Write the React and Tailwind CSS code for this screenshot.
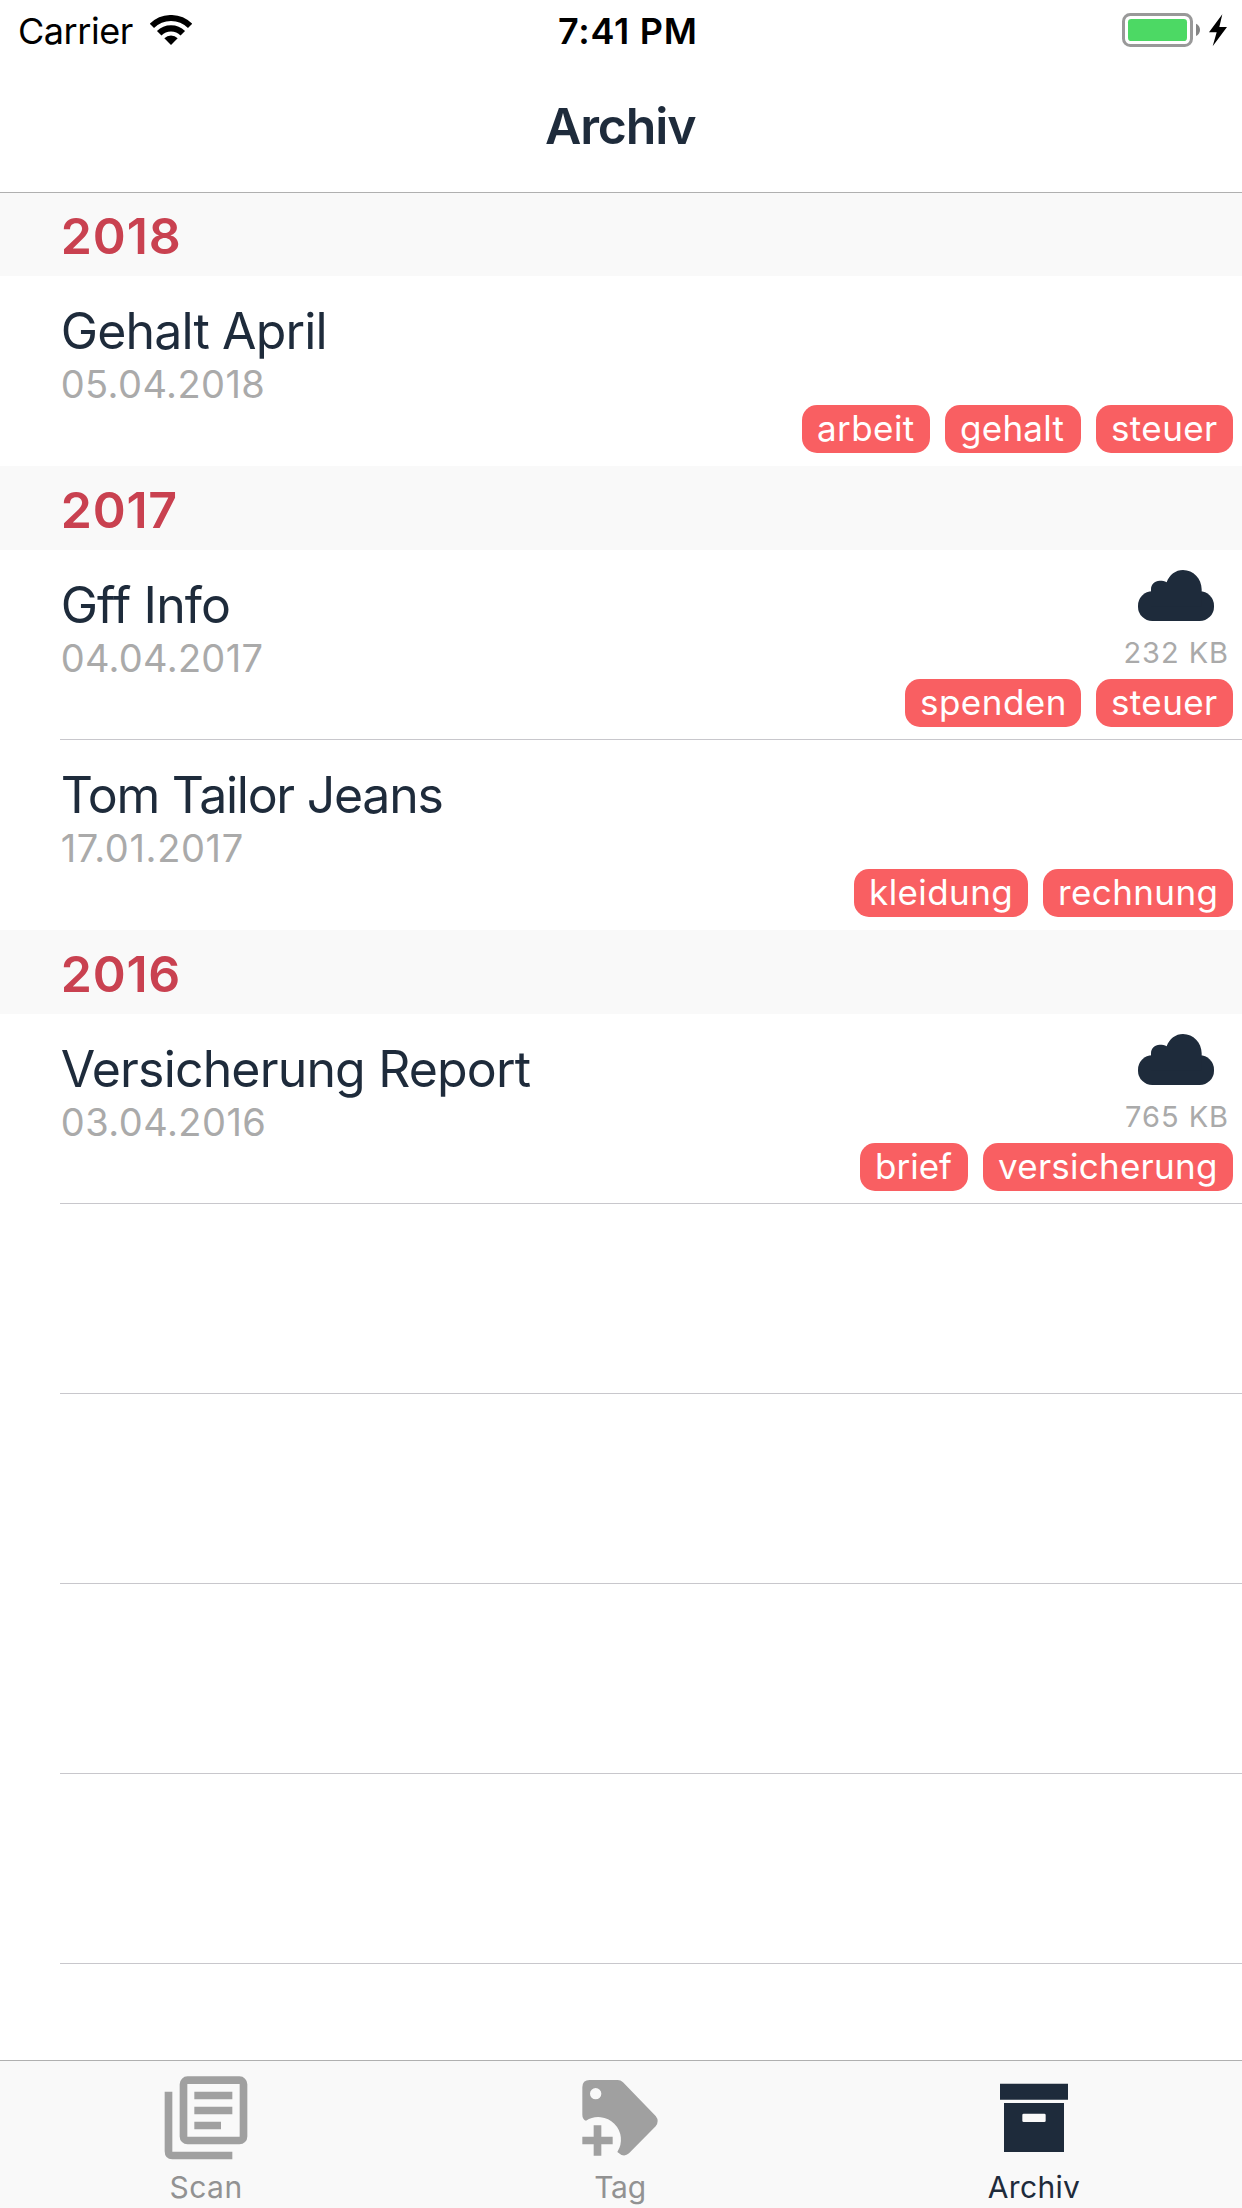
const sections = [
  {
    year: "2018",
    tracking: "tracking-[0.95px]",
    rows: [
      {
        title: "Gehalt April",
        titleTracking: "tracking-[-0.85px]",
        date: "05.04.2018",
        dateTracking: "tracking-[0.42px]",
        tags: [
          ["arbeit", "w-32 tracking-[0.42px]"],
          ["gehalt", "w-[136px] tracking-[0.26px]"],
          ["steuer", "w-[137px] tracking-[0.38px]"],
        ],
      },
    ],
  },
  {
    year: "2017",
    tracking: "tracking-[0.8px]",
    rows: [
      {
        title: "Gff Info",
        titleTracking: "tracking-[-0.88px]",
        date: "04.04.2017",
        dateTracking: "tracking-[0.3px]",
        size: "232 KB",
        line: true,
        tags: [
          ["spenden", "w-44 tracking-[0.48px]"],
          ["steuer", "w-[137px] tracking-[0.38px]"],
        ],
      },
      {
        title: "Tom Tailor Jeans",
        titleTracking: "tracking-[-1.27px]",
        date: "17.01.2017",
        dateTracking: "tracking-[0.65px]",
        tags: [
          ["kleidung", "w-[174px] tracking-[0.42px]"],
          ["rechnung", "w-[190px] tracking-[0.4px]"],
        ],
      },
    ],
  },
  {
    year: "2016",
    tracking: "tracking-[0.8px]",
    rows: [
      {
        title: "Versicherung Report",
        titleTracking: "tracking-[-0.84px]",
        date: "03.04.2016",
        dateTracking: "tracking-[0.48px]",
        size: "765 KB",
        line: true,
        tags: [
          ["brief", "w-[108px] tracking-[0px]"],
          ["versicherung", "w-[250px] tracking-[0.25px]"],
        ],
      },
    ],
  },
];

function WifiIcon() {
  return (
    <svg className="h-[30px] w-[42px]" viewBox="450 45 126 90" fill="none" stroke="#000">
      <path d="M455.7 77.7A81 81 0 0 1 570.3 77.7" strokeWidth="18" />
      <path d="M477.6 99.6A50 50 0 0 1 548.4 99.6" strokeWidth="19" />
      <path d="M493 115A28 28 0 0 1 533 115L513 135Z" fill="#000" stroke="none" />
    </svg>
  );
}

function BatteryIcon() {
  return (
    <svg className="h-[34px] w-[106px]" viewBox="240 39 318 102">
      <rect x="244.5" y="43.5" width="204" height="93" rx="20" fill="none" stroke="#999" strokeWidth="9" />
      <rect x="258" y="57" width="177" height="66" rx="10" fill="#4cd964" />
      <path d="M462 71C478 78 478 101 462 108Z" fill="#858585" />
      <path d="M541 43L501 97H524L512 139L555 81H532Z" fill="#000" />
    </svg>
  );
}

function CloudIcon() {
  return (
    <svg className="h-[51px] w-[76px]" viewBox="1074 570 228 153" fill="#1e2b3b">
      <rect x="1074" y="634" width="228" height="89" rx="43" />
      <path d="M1113 680V628C1113 613 1124 602 1139 602C1147 602 1154 603 1160 607C1168 584 1187 570 1209 570C1240 570 1265 596 1265 628V680Z" />
    </svg>
  );
}

function ScanIcon() {
  return (
    <svg className="h-[90px] w-[90px]" viewBox="96 60 270 270" fill="#a0a0a0">
      <rect x="160.5" y="90.5" width="180" height="181" rx="12" fill="none" stroke="#a0a0a0" strokeWidth="23" />
      <path d="M104 125H127V305H307V328H127Q104 327 104 304Z" />
      <path d="M193 125H307V148H193ZM193 170H307V193H193ZM193 215H273V238H193Z" />
    </svg>
  );
}

function TagIcon() {
  return (
    <svg className="h-[90px] w-[90px]" viewBox="78 60 270 270" fill="#a0a0a0">
      <path
        fillRule="evenodd"
        d="M119 90H203Q212 90 219 97L317 198Q329 213 317 229L237 310Q221 324 202 306A68 68 0 0 0 108 212Q97 208 97 194V112Q97 90 119 90ZM137 114A17 17 0 1 0 137 148A17 17 0 1 0 137 114Z"
      />
      <path d="M131 226H154V260H188V283H154V317H131V283H97V260H131Z" />
    </svg>
  );
}

function ArchiveIcon() {
  return (
    <svg className="h-[90px] w-[90px]" viewBox="90 60 270 270" fill="#1e2b3b">
      <path d="M120 101H324V149H120Z" />
      <path
        fillRule="evenodd"
        d="M132 159H312V306H132ZM191 191Q187 191 187 195V212Q187 216 191 216H253Q257 216 257 212V195Q257 191 253 191Z"
      />
    </svg>
  );
}

function Row({ row }) {
  return (
    <div className="ml-[60px]">
      <div className={`flex h-[190px] justify-between pr-[9px] ${row.line ? "border-b border-[#c8c7cc]" : ""}`}>
        <div className="flex flex-col pt-[25px] pl-[0.7px] whitespace-nowrap">
          <div className={`text-[50px] leading-[60px] ${row.titleTracking}`}>{row.title}</div>
          <div className={`mt-px text-[38px] leading-[44px] text-[#aaa] ${row.dateTracking}`}>{row.date}</div>
        </div>
        <div className="flex flex-col items-end">
          <div className="flex h-[129px] shrink-0 flex-col items-end pt-5">
            {row.size && (
              <>
                <div className="pr-[19px]">
                  <CloudIcon />
                </div>
                <div className="mt-[14px] pr-[4px] text-[29px] leading-[36px] tracking-[0.95px] text-[#aaa]">{row.size}</div>
              </>
            )}
          </div>
          <div className="flex gap-[15px]">
            {row.tags.map(([name, style]) => (
              <div
                key={name}
                className={`h-12 rounded-[15px] bg-[#f95f62] pl-[15px] text-[35px] leading-[46px] whitespace-nowrap text-white ${style}`}
              >
                {name}
              </div>
            ))}
          </div>
        </div>
      </div>
    </div>
  );
}

const tabs = [
  { name: "Scan", Icon: ScanIcon, style: "text-[#929292] tracking-[0.49px]" },
  { name: "Tag", Icon: TagIcon, style: "text-[#929292] tracking-[-0.26px]" },
  { name: "Archiv", Icon: ArchiveIcon, style: "text-[#1e2b3b] tracking-[0.3px]" },
];

export default function App() {
  return (
    <div className="flex h-[2208px] w-[1242px] flex-col overflow-hidden bg-white font-['Inter',sans-serif] text-[#1e2b3b]">
      <header className="h-48 shrink-0">
        <div className="flex h-[60px] text-black">
          <div className="w-[150px] pt-[9px] pl-[18px] text-[36px] leading-[44px] tracking-[-0.46px]">Carrier</div>
          <div className="pt-[15px]">
            <WifiIcon />
          </div>
          <div className="ml-[366px] pt-[9px] text-[36px] leading-[44px] font-semibold tracking-[0.72px]">7:41 PM</div>
          <div className="mr-[14px] ml-auto pt-[13px]">
            <BatteryIcon />
          </div>
        </div>
        <h1 className="pt-9 pr-[1.5px] text-center text-[50px] leading-[60px] font-semibold tracking-[-1.1px]">Archiv</h1>
      </header>

      <main className="flex-1 overflow-hidden">
        {sections.map((s, i) => (
          <section key={s.year}>
            <h2
              className={`h-[84px] bg-[#f9f9f9] pt-[14px] pl-[60.7px] text-[50px] leading-[60px] font-semibold text-[#c94150] ${s.tracking} ${
                i === 0 ? "shadow-[inset_0_1px_0_#b0b0b0]" : ""
              }`}
            >
              {s.year}
            </h2>
            {s.rows.map((r) => (
              <Row key={r.title} row={r} />
            ))}
          </section>
        ))}
        {[0, 1, 2, 3].map((n) => (
          <div key={n} className="ml-[60px] h-[190px] border-b border-[#c8c7cc]" />
        ))}
      </main>

      <nav className="flex h-[148px] shrink-0 border-t border-[#b0b0b0] bg-[#f9f9f9]">
        {tabs.map(({ name, Icon, style }) => (
          <div key={name} className="flex flex-1 flex-col items-center pt-[9px]">
            <Icon />
            <div className={`mt-[9px] pr-[2px] text-[30px] leading-[36px] ${style}`}>{name}</div>
          </div>
        ))}
      </nav>
    </div>
  );
}
